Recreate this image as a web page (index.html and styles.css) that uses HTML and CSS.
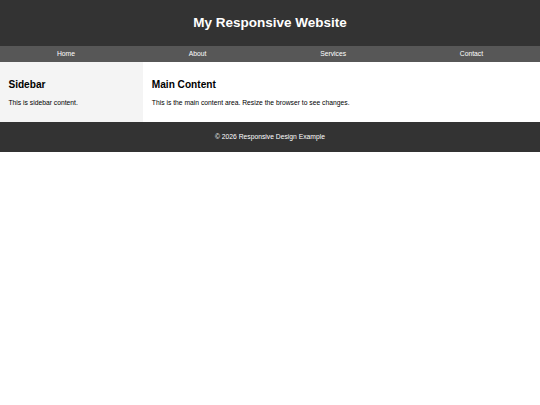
FILE: index.html
```html
<!DOCTYPE html>
<html lang="en">
<head>
    <meta charset="UTF-8">
    <meta name="viewport" content="width=device-width, initial-scale=1.0">
    <title>My Responsive Website</title>
    <link rel="stylesheet" href="styles.css">
</head>
<body>
    <header class="site-header">
        <h1>My Responsive Website</h1>
    </header>

    <nav class="site-nav">
        <a href="#">Home</a>
        <a href="#">About</a>
        <a href="#">Services</a>
        <a href="#">Contact</a>
    </nav>

    <div class="container">
        <aside class="sidebar">
            <h2>Sidebar</h2>
            <p>This is sidebar content.</p>
        </aside>
        <main class="main-content">
            <h2>Main Content</h2>
            <p>This is the main content area. Resize the browser to see changes.</p>
        </main>
    </div>

    <footer class="site-footer">
        <p>&copy; 2026 Responsive Design Example</p>
    </footer>
</body>
</html>
```

FILE: styles.css
```css
body {
    font-family: 'Liberation Sans', Arial, sans-serif;
    margin: 0;
    padding: 0;
    color: #000;
    background-color: #fff;
}
.site-header {
    background-color: #333;
    color: #fff;
    text-align: center;
    padding: 6.25px 0 6.5px;
}
.site-header h1 {
    margin: 9px 0;
    font-size: 13.5px;
    line-height: 15.5px;
}
.site-nav {
    display: flex;
    justify-content: space-around;
    background-color: #575757;
}
.site-nav a {
    color: #fff;
    text-decoration: none;
    font-size: 6.75px;
    line-height: 7.8px;
    padding: 4.1px 0;
}
.container {
    display: flex;
}
.sidebar {
    flex: 1;
    background-color: #f4f4f4;
    padding: 8.4px;
}
.main-content {
    flex: 3;
    padding: 8.4px;
}
.container h2 {
    font-size: 10.125px;
    line-height: 11.6px;
    margin: 8.4px 0;
}
.container p {
    font-size: 6.75px;
    line-height: 7.8px;
    margin: 6.75px 0;
}
.site-footer {
    background-color: #333;
    color: #fff;
    text-align: center;
    padding: 4.2px 0;
}
.site-footer p {
    font-size: 6.75px;
    line-height: 7.8px;
    margin: 6.75px 0;
}
```
